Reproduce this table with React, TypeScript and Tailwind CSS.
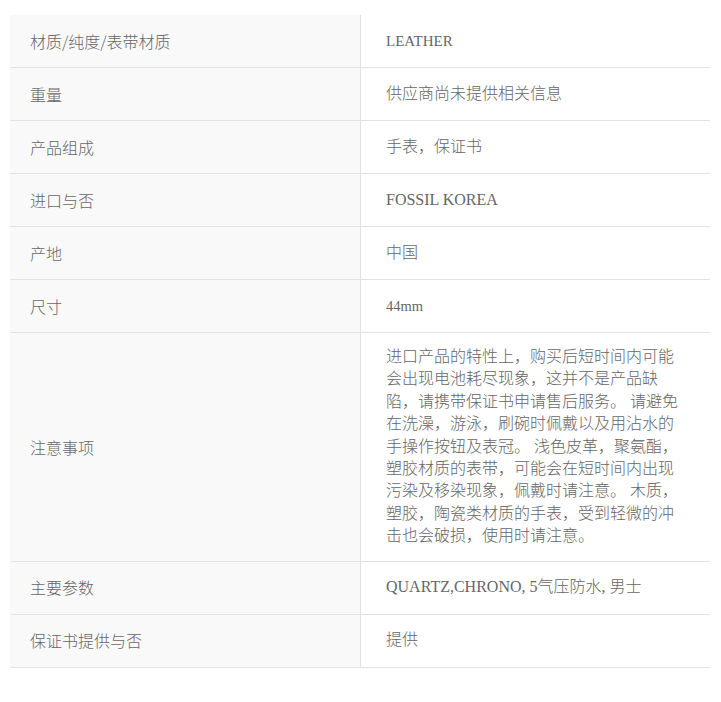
const rows: { label: string; value: React.ReactNode }[] = [
  { label: "材质/纯度/表带材质", value: <span className="text-[15px]">LEATHER</span> },
  { label: "重量", value: "供应商尚未提供相关信息" },
  { label: "产品组成", value: "手表，保证书" },
  { label: "进口与否", value: "FOSSIL KOREA" },
  { label: "产地", value: "中国" },
  { label: "尺寸", value: <span className="text-[14.5px]">44mm</span> },
  {
    label: "注意事项",
    value:
      "进口产品的特性上，购买后短时间内可能会出现电池耗尽现象，这并不是产品缺陷，请携带保证书申请售后服务。 请避免在洗澡，游泳，刷碗时佩戴以及用沾水的手操作按钮及表冠。 浅色皮革，聚氨酯，塑胶材质的表带，可能会在短时间内出现污染及移染现象，佩戴时请注意。 木质，塑胶，陶瓷类材质的手表，受到轻微的冲击也会破损，使用时请注意。",
  },
  { label: "主要参数", value: "QUARTZ,CHRONO, 5气压防水, 男士" },
  { label: "保证书提供与否", value: "提供" },
];

export default function App() {
  return (
    <div className="min-h-[702px] bg-white px-[10px] pt-[15px] text-[#666]">
      <div className="w-[700px]">
        {rows.map((row) => (
          <div key={row.label} className="grid grid-cols-[351px_349px] border-b border-[#e2e2e2]">
            <div className="flex min-h-[52px] items-center border-r border-[#e2e2e2] bg-[#f9f9f9] pl-[20px] text-[16px] leading-[22.4px] font-['Noto_Sans_CJK_SC',sans-serif] font-light">
              {row.label}
            </div>
            <div className="flex min-h-[52px] items-center py-[13px] pl-[25px] pr-[24px] text-[16px] leading-[22.4px] font-['Liberation_Serif','Noto_Sans_CJK_SC',serif] font-light">
              <p>{row.value}</p>
            </div>
          </div>
        ))}
      </div>
    </div>
  );
}
